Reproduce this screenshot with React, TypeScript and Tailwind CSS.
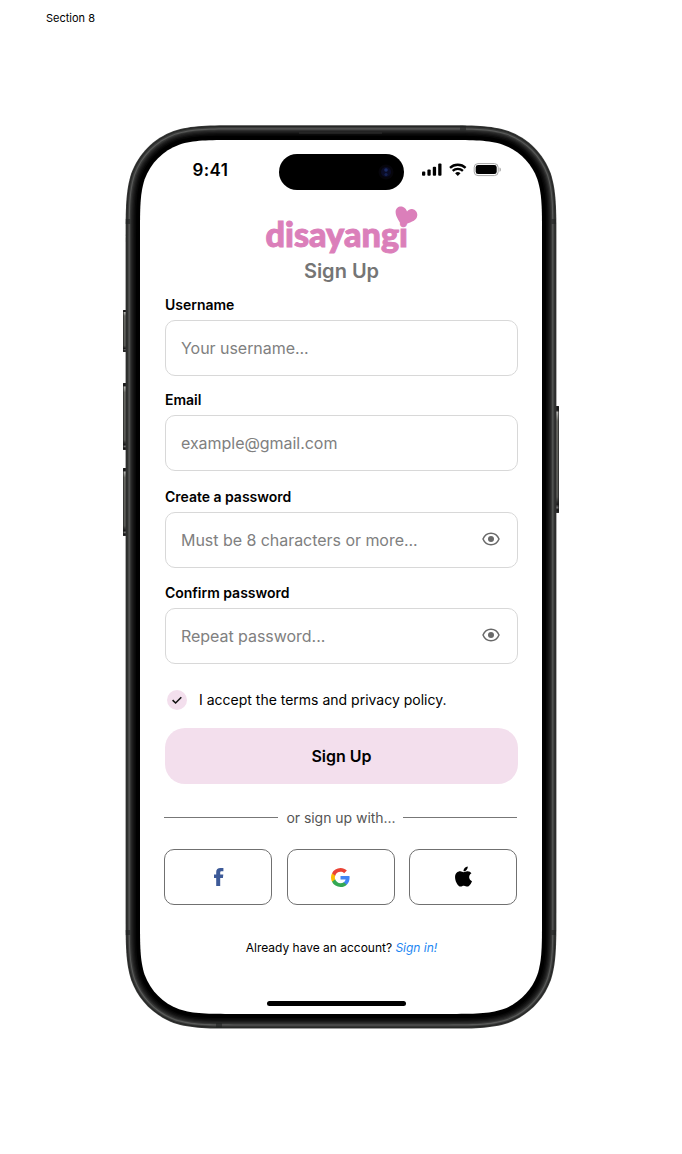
import React from "react";
import { FaApple } from "react-icons/fa";

/* Rectangle with continuous-curvature corners. */
function squircle(x: number, y: number, w: number, h: number, r: number): string {
  const a = 1.528665 * r;
  const b = 1.08849296 * r;
  const c = 0.86840694 * r;
  const d = 0.63149379 * r;
  const e = 0.07491139 * r;
  const f = 0.37282383 * r;
  const g = 0.16905956 * r;
  const R = x + w;
  const B = y + h;
  return [
    `M${x + a} ${y}H${R - a}`,
    `C${R - b} ${y} ${R - c} ${y} ${R - d} ${y + e}`,
    `C${R - f} ${y + g} ${R - g} ${y + f} ${R - e} ${y + d}`,
    `C${R} ${y + c} ${R} ${y + b} ${R} ${y + a}`,
    `V${B - a}`,
    `C${R} ${B - b} ${R} ${B - c} ${R - e} ${B - d}`,
    `C${R - g} ${B - f} ${R - f} ${B - g} ${R - d} ${B - e}`,
    `C${R - c} ${B} ${R - b} ${B} ${R - a} ${B}`,
    `H${x + a}`,
    `C${x + b} ${B} ${x + c} ${B} ${x + d} ${B - e}`,
    `C${x + f} ${B - g} ${x + g} ${B - f} ${x + e} ${B - d}`,
    `C${x} ${B - c} ${x} ${B - b} ${x} ${B - a}`,
    `V${y + a}`,
    `C${x} ${y + b} ${x} ${y + c} ${x + e} ${y + d}`,
    `C${x + g} ${y + f} ${x + f} ${y + g} ${x + d} ${y + e}`,
    `C${x + c} ${y} ${x + b} ${y} ${x + a} ${y}Z`,
  ].join("");
}

const rims = [
  { inset: 0, color: "#3a3b3a" },
  { inset: 0.8, color: "#252625" },
  { inset: 1.8, color: "#3a3b3a" },
  { inset: 3, color: "#585958" },
  { inset: 4.2, color: "#363736" },
  { inset: 5.4, color: "#262626" },
  { inset: 6.6, color: "#1b1b1b" },
  { inset: 7.8, color: "#111111" },
  { inset: 9, color: "#080808" },
  { inset: 10.5, color: "#000000" },
];

const sideKeys = [
  { x: 0, y: 185, h: 42 },
  { x: 0, y: 258, h: 67 },
  { x: 0, y: 343, h: 68 },
  { x: 432.5, y: 281, h: 107 },
];

const antennaBands = [
  { x: 2.7, y: 94, w: 4.5, h: 5 },
  { x: 428.5, y: 94, w: 4.5, h: 5 },
  { x: 2.7, y: 805, w: 4.5, h: 5 },
  { x: 428.5, y: 805, w: 4.5, h: 5 },
  { x: 337, y: 0.8, w: 6, h: 4.5 },
  { x: 93, y: 898, w: 6, h: 4.5 },
];

function DeviceFrame() {
  return (
    <svg className="absolute inset-0" width="436" height="904" viewBox="0 0 436 904" aria-hidden="true">
      <defs>
        <linearGradient id="key" x1="0" y1="0" x2="0" y2="1">
          <stop offset="0" stopColor="#1b1b1b" />
          <stop offset="0.04" stopColor="#1b1b1b" />
          <stop offset="0.06" stopColor="#b5b6b2" />
          <stop offset="0.14" stopColor="#686963" />
          <stop offset="0.85" stopColor="#5a5b57" />
          <stop offset="0.92" stopColor="#1a1a1a" />
          <stop offset="0.95" stopColor="#777" />
          <stop offset="0.97" stopColor="#111" />
          <stop offset="1" stopColor="#333" />
        </linearGradient>
      </defs>
      {sideKeys.map((k) => (
        <g key={k.y}>
          <rect x={k.x} y={k.y} width="3.5" height={k.h} rx="0.8" fill="url(#key)" />
          <rect x={k.x === 0 ? 0 : 435} y={k.y} width="1" height={k.h} fill="#1c1c1c" opacity="0.6" />
        </g>
      ))}
      {rims.map((r) => (
        <path
          key={r.inset}
          d={squircle(2.6 + r.inset, 0.2 + r.inset, 430.8 - 2 * r.inset, 903.4 - 2 * r.inset, 76 - r.inset)}
          fill={r.color}
        />
      ))}
      {antennaBands.map((b) => (
        <rect key={`${b.x}-${b.y}`} x={b.x} y={b.y} width={b.w} height={b.h} fill="#202221" opacity="0.6" />
      ))}
      <path d="M176 8H259" stroke="#303030" strokeWidth="1" />
      <path d={squircle(17, 15, 402, 874, 62)} fill="#fff" />
    </svg>
  );
}

function StatusBar() {
  return (
    <div className="flex h-[61px] items-start">
      <div className="mt-[19px] ml-[52.5px] w-[86px] text-[17px] leading-[22px] font-semibold tracking-[0.35px]">9:41</div>
      <div className="mt-[14px] flex h-9 w-[125px] items-center justify-end rounded-full bg-black pr-[10px]">
        <svg width="16" height="16" viewBox="0 0 16 16">
          <circle cx="8" cy="8" r="7.5" fill="#06050b" />
          <circle cx="8" cy="8" r="5" fill="#0a0c26" />
          <circle cx="8" cy="6" r="1.8" fill="#1a2a63" />
          <circle cx="8" cy="10.5" r="1.6" fill="#142051" />
        </svg>
      </div>
      <svg className="mt-[23px] ml-[18.5px]" width="80" height="14" viewBox="0 0 80 14">
        <rect x="0" y="8.6" width="3.3" height="4.2" rx="1" />
        <rect x="5.4" y="6.5" width="3.3" height="6.3" rx="1" />
        <rect x="10.8" y="3.7" width="3.3" height="9.1" rx="1" />
        <rect x="16.2" y="0.6" width="3.3" height="12.2" rx="1" />
        <g fill="none" stroke="#000" strokeWidth="2.3">
          <path d="M28 4.9a11.2 11.2 0 0 1 15.6 0" />
          <path d="M30.7 7.9a7.4 7.4 0 0 1 10.2 0" />
        </g>
        <path d="M35.8 12.9 33.1 10.2a4 4 0 0 1 5.4 0Z" />
        <rect x="52.2" y="0.6" width="24" height="12" rx="3.8" fill="none" stroke="#a6a6a6" />
        <path d="M77.5 4.6v4.2c.9-.4 1.4-1.2 1.4-2.1s-.5-1.7-1.4-2.1Z" fill="#a6a6a6" />
        <rect x="53.7" y="2.1" width="21" height="9" rx="2.4" />
      </svg>
    </div>
  );
}

function Logo() {
  return (
    <svg className="ml-[120px] block" width="162" height="54" viewBox="0 0 162 54" role="img" aria-label="disayangi">
      <text
        x="5.5"
        y="46.2"
        textLength="142.5"
        lengthAdjust="spacingAndGlyphs"
        fill="#db7fba"
        stroke="#db7fba"
        strokeWidth="1"
        style={{ fontFamily: "Lato, sans-serif", fontWeight: 900, fontSize: "34px" }}
      >
        disayangi
      </text>
      <path
        d="M142 25.4C140.4 21.4 135.6 16.4 135.6 11C135.6 5.6 141.6 3.8 145 7.2C146.1 8.3 146.8 9.6 147 10.6C148.6 8.6 150.6 7.6 153 8.3C157.2 9.6 158.4 14 156.4 17.2C154 21 147 22 142 25.4Z"
        fill="#db7fba"
      />
    </svg>
  );
}

function EyeIcon() {
  return (
    <svg className="mb-[2px]" width="18" height="14" viewBox="0 0 18 14" fill="none">
      <path
        d="M1 7C2.6 3.2 5.6 1.2 9 1.2S15.4 3.2 17 7C15.4 10.8 12.4 12.8 9 12.8S2.6 10.8 1 7Z"
        stroke="#696969"
        strokeWidth="1.5"
        strokeLinejoin="round"
      />
      <circle cx="9" cy="7" r="3" fill="#696969" />
    </svg>
  );
}

function GoogleIcon() {
  return (
    <svg width="19" height="19" viewBox="0 0 24 24">
      <path fill="#4285F4" d="M23.49 12.27c0-.79-.07-1.54-.19-2.27H12v4.51h6.47c-.29 1.48-1.14 2.73-2.4 3.58v3h3.86c2.26-2.09 3.56-5.17 3.56-8.82Z" />
      <path fill="#34A853" d="M12 24c3.24 0 5.95-1.08 7.93-2.91l-3.86-3c-1.08.72-2.45 1.16-4.07 1.16-3.13 0-5.78-2.11-6.73-4.96H1.29v3.09C3.26 21.3 7.31 24 12 24Z" />
      <path fill="#FBBC05" d="M5.27 14.29c-.25-.72-.38-1.49-.38-2.29s.14-1.57.38-2.29V6.62H1.29C.47 8.24 0 10.06 0 12s.47 3.76 1.29 5.38l3.98-3.09Z" />
      <path fill="#EA4335" d="M12 4.75c1.77 0 3.35.61 4.6 1.8l3.42-3.42C17.95 1.19 15.24 0 12 0 7.31 0 3.26 2.7 1.29 6.62l3.98 3.09C6.22 6.86 8.87 4.75 12 4.75Z" />
    </svg>
  );
}

function Field({ label, placeholder, secret }: { label: string; placeholder: string; secret?: boolean }) {
  return (
    <label className="block">
      <span className="block h-[25px] text-[14px] leading-[20px] font-semibold tracking-[-0.02px]">{label}</span>
      <span className="flex h-14 items-center justify-between rounded-[10px] border border-[#d8d8d8] pr-[17px] pl-[15px]">
        <span className="text-[16px] leading-5 tracking-[-0.04px] text-[#808080]">{placeholder}</span>
        {secret && <EyeIcon />}
      </span>
    </label>
  );
}

function SocialButton({ label, children }: { label: string; children: React.ReactNode }) {
  return (
    <button
      aria-label={label}
      className="flex h-14 w-[108px] items-center justify-center rounded-[10px] border border-[#707070]"
    >
      {children}
    </button>
  );
}

export default function App() {
  return (
    <main
      className="h-[1154px] w-[682px] overflow-hidden bg-white text-black"
      style={{ fontFamily: "Inter, sans-serif" }}
    >
      <div className="h-[125px] pt-[10px] pl-[46px] text-[11px] leading-4">Section 8</div>
      <div className="relative ml-[123px] h-[904px] w-[436px] px-[17px] py-[15px]">
        <DeviceFrame />
        <div className="relative h-[874px]">
          <StatusBar />
          <Logo />
          <h1 className="mt-[4px] pl-px text-center text-[20px] leading-6 font-semibold text-[#757575]">Sign Up</h1>
          <form className="ml-[25px] w-[353px] pt-[12px]">
            <Field label="Username" placeholder="Your username..." />
            <div className="mt-[14px]">
              <Field label="Email" placeholder="example@gmail.com" />
            </div>
            <div className="mt-[16px]">
              <Field label="Create a password" placeholder="Must be 8 characters or more..." secret />
            </div>
            <div className="mt-[15px]">
              <Field label="Confirm password" placeholder="Repeat password..." secret />
            </div>
            <div className="mt-[26px] flex h-5 items-center pl-[2px]">
              <span className="flex size-5 items-center justify-center rounded-full bg-[#f3dfed]">
                <svg width="12" height="10" viewBox="0 0 12 10" fill="none">
                  <path d="M1.6 5.1 4.6 8 10.3 2.3" stroke="#111" strokeWidth="1.6" />
                </svg>
              </span>
              <span className="ml-3 text-[14px] leading-5">I accept the terms and privacy policy.</span>
            </div>
            <button
              type="button"
              className="mt-[18px] block h-14 w-full rounded-[20px] bg-[#f3dfed] text-[16px] font-semibold"
            >
              Sign Up
            </button>
          </form>
          <div className="mt-[23px] ml-[24px] flex h-5 w-[353px] items-center justify-between text-[14px] text-[#555]">
            <span className="h-px w-[113.5px] bg-[#777]" />
            <span className="pl-px tracking-[-0.03px]">or sign up with...</span>
            <span className="h-px w-[113.5px] bg-[#777]" />
          </div>
          <div className="mt-[22px] ml-[24px] flex w-[353px] justify-between">
            <SocialButton label="Facebook">
              <svg className="ml-px" width="10" height="18" viewBox="0 0 10 18" fill="#3d5a98">
                <path d="M2.2 18V9.9H0V6.4H2.2V4.1C2.2 1.4 3.8 0 6.4 0H9.4V3.2H7.7C6.6 3.2 6.2 3.7 6.2 4.6V6.4H9.3L8.9 9.9H6.2V18Z" />
              </svg>
            </SocialButton>
            <SocialButton label="Google">
              <GoogleIcon />
            </SocialButton>
            <SocialButton label="Apple">
              <FaApple size={23} className="mb-px" />
            </SocialButton>
          </div>
          <p className="mt-[33px] pl-px text-center text-[12px] leading-5 tracking-[-0.01px]">
            Already have an account? <a className="text-[#1c86f2] italic">Sign in!</a>
          </p>
          <div className="mt-[43px] ml-[127px] h-[5px] w-[139px] rounded-full bg-black" />
        </div>
      </div>
    </main>
  );
}
